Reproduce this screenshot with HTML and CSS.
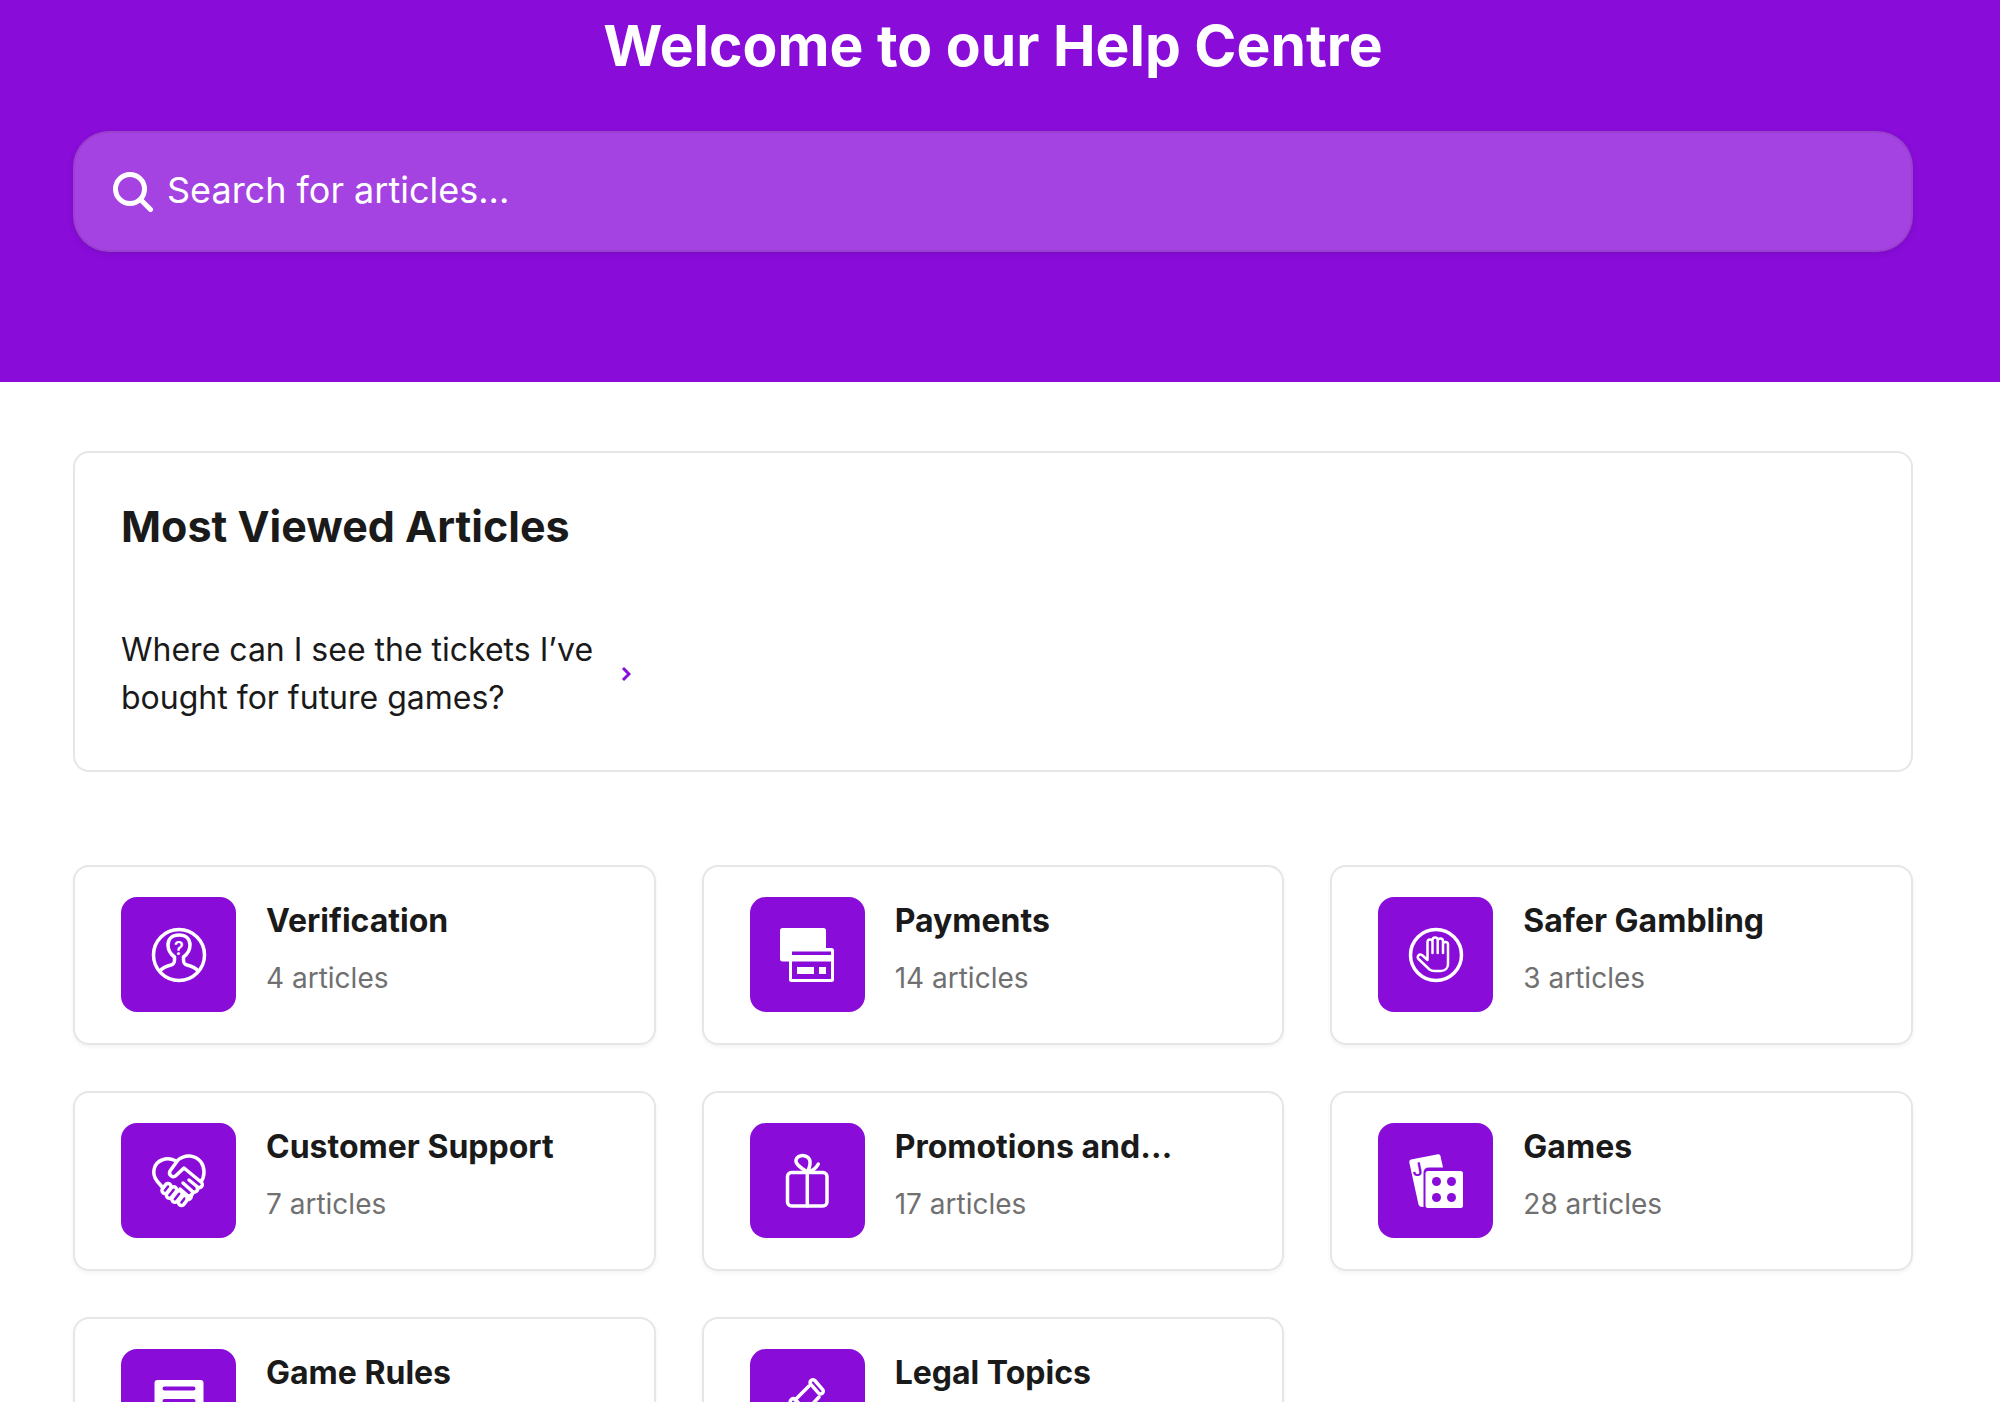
FILE: index.html
```html
<!DOCTYPE html>
<html lang="en">
<head>
    <meta charset="UTF-8">
    <meta name="viewport" content="width=device-width, initial-scale=1.0">
    <title>Help Centre</title>
    <link rel="stylesheet" href="styles.css">
</head>
<body>
    <header class="header">
        <h1>Welcome to our Help Centre</h1>
        <form class="search-bar" role="search">
            <label for="q" aria-label="Search">
                <svg class="search-icon" viewBox="0 0 40 40">
                    <circle cx="17" cy="17" r="14.5"/>
                    <path d="M27.500 27.500L37.500 37.500"/>
                </svg>
            </label>
            <input type="text" id="q" name="q" placeholder="Search for articles...">
        </form>
    </header>

    <main class="content">
        <section class="most-viewed">
            <h2>Most Viewed Articles</h2>
            <a class="article" href="#tickets">
                <span>Where can I see the tickets I’ve bought for future games?</span>
                <svg class="chevron" viewBox="0 0 10 16"><path d="M2 2l6 6-6 6"/></svg>
            </a>
        </section>

        <section class="topics">
            <a class="card" href="#verification">
                <span class="tile">
                    <svg class="line" viewBox="0 0 54 54">
                        <circle cx="27" cy="27" r="25.500"/>
                        <path d="M8 43c3-4 7-5 11-6 3-1 3.500-2 3.500-5v-3c-4-3-6.500-7-6.500-12 0-6 4-10 11-10s11 4 11 10c0 5-2.500 9-6.500 12v3c0 3 .5 4 3.500 5 4 1 8 2 11 6"/>
                        <text class="glyph" x="27" y="27">?</text>
                    </svg>
                </span>
                <div class="card-text">
                    <h3>Verification</h3>
                    <p>4 articles</p>
                </div>
            </a>

            <a class="card" href="#payments">
                <span class="tile">
                    <svg class="solid" viewBox="0 0 54 54">
                        <rect width="46" height="33.500" rx="2.500"/>
                        <rect x="9" y="20" width="45" height="34" rx="2.500"/>
                        <path class="cut" d="M12 23.500h39v3.500H12zM12 33.500h39V51H12z"/>
                        <path d="M17 39h17v7H17zM39 39h7v7h-7z"/>
                    </svg>
                </span>
                <div class="card-text">
                    <h3>Payments</h3>
                    <p>14 articles</p>
                </div>
            </a>

            <a class="card" href="#safer-gambling">
                <span class="tile">
                    <svg class="line" viewBox="0 0 54 54">
                        <circle cx="27" cy="27" r="25.500"/>
                        <path class="thin" d="M18.500 32L13 27c-3-1.500-5.500 1.500-3.500 4l11 10.500c1.500 1.200 3 1.500 5 1.500h6c4.500 0 7.500-2.500 7.500-7V16.500c0-3.500-5-3.500-5 0V25M18.500 32V14c0-3.500 5-3.500 5 0v11M23.500 14v-2c0-3.500 5.200-3.500 5.200 0v13M28.700 13c0-3.500 5.300-3.500 5.300 0v12"/>
                    </svg>
                </span>
                <div class="card-text">
                    <h3>Safer Gambling</h3>
                    <p>3 articles</p>
                </div>
            </a>

            <a class="card" href="#customer-support">
                <span class="tile">
                    <svg class="line" viewBox="0 0 54 54">
                        <path d="M11 34L5 27C-1 19 2 9 10 6c5-2 9-1.500 13 .5"/>
                        <path d="M49 28c4-6 4-14 0-20C43 .5 33 0 26 6l-8 11c-2 4 3 7.500 6 4.500l8-7.500 17 14c3.500 3-.5 7.500-4 4.500l-8-6.500M45 33c2 4-2 6.500-5 4l-9-8M40 37c2 4-2 6.500-5 4l-7-6"/>
                        <rect x="11.500" y="29" width="6" height="11" rx="3" transform="rotate(38 14.500 34.500)"/>
                        <rect x="16.500" y="32" width="6" height="13" rx="3" transform="rotate(38 19.500 38.500)"/>
                        <rect x="22" y="36" width="6" height="13" rx="3" transform="rotate(38 25 42.500)"/>
                        <rect x="28" y="41" width="6" height="11" rx="3" transform="rotate(38 31 46.500)"/>
                        <path d="M35 45c2 1.500 5-1 4-4"/>
                    </svg>
                </span>
                <div class="card-text">
                    <h3>Customer Support</h3>
                    <p>7 articles</p>
                </div>
            </a>

            <a class="card" href="#promotions">
                <span class="tile">
                    <svg class="line" viewBox="0 0 54 54">
                        <rect x="7.500" y="18.500" width="39.500" height="33.500" rx="4"/>
                        <path d="M27.300 52V18C21 14 15 10 16 6c1-4 6-5 9-4 6 1.500 6.500 8 2.300 16 5-1 9-4 11-8"/>
                    </svg>
                </span>
                <div class="card-text">
                    <h3>Promotions and…</h3>
                    <p>17 articles</p>
                </div>
            </a>

            <a class="card" href="#games">
                <span class="tile">
                    <svg class="solid" viewBox="0 0 54 54">
                        <path d="M2 5.500L29 .3q2-.3 2.500 1.700l2.500 11.500H20q-5.500 0-5.500 5.500v34q-4 .5-5-2.500L.3 8.500q-.5-2.500 1.700-3z"/>
                        <text class="glyph cut" x="8" y="22" transform="rotate(-11 8 15)">J</text>
                        <rect x="16.500" y="17" width="37.500" height="37" rx="2.500"/>
                        <g class="cut">
                            <circle cx="27.500" cy="27.500" r="4.500"/>
                            <circle cx="42.500" cy="27.500" r="4.500"/>
                            <circle cx="27.500" cy="43.500" r="4.500"/>
                            <circle cx="42.500" cy="43.500" r="4.500"/>
                        </g>
                    </svg>
                </span>
                <div class="card-text">
                    <h3>Games</h3>
                    <p>28 articles</p>
                </div>
            </a>

            <a class="card" href="#game-rules">
                <span class="tile">
                    <svg class="solid" viewBox="0 0 54 54">
                        <rect x="2.500" width="49" height="54" rx="3"/>
                        <path class="cut-line" d="M12.500 8.500h29M12.500 21h29M12.500 33.500h29M12.500 45h18"/>
                    </svg>
                </span>
                <div class="card-text">
                    <h3>Game Rules</h3>
                </div>
            </a>

            <a class="card" href="#legal-topics">
                <span class="tile">
                    <svg class="line" viewBox="0 0 54 54">
                        <rect x="28" y="4" width="17" height="5.500" rx="2.500" transform="rotate(49 36.500 7)"/>
                        <path d="M29 6L15 20M39 17L26 31"/>
                        <rect x="8" y="24" width="21" height="6" rx="2.500" transform="rotate(49 18 27)"/>
                        <path d="M31 25l20 18c2 3-2 6-4 4L28 29M4 52h24v-6H4z"/>
                    </svg>
                </span>
                <div class="card-text">
                    <h3>Legal Topics</h3>
                </div>
            </a>
        </section>
    </main>
</body>
</html>
```
FILE: styles.css
```css
* {
    box-sizing: border-box;
}
html {
    overflow-x: hidden;
    scrollbar-width: none;
}
body {
    margin: 0;
    font-family: Inter, "Liberation Sans", sans-serif;
    color: #1a1a1a;
    background-color: #fff;
}
h1, h2, h3, p {
    margin: 0;
}
a {
    color: inherit;
    text-decoration: none;
}
svg {
    display: block;
    flex: none;
}

/* Header */
.header {
    background-color: #890cd9;
    padding: 10px 87px 130px 73px;
}
.header h1 {
    color: #fff;
    font-size: 57px;
    line-height: 72px;
    font-weight: 700;
    text-align: center;
    margin-bottom: 49px;
}
.search-bar {
    display: flex;
    align-items: center;
    gap: 14px;
    height: 121px;
    padding: 0 38px;
    border: 2px solid rgba(128, 64, 160, 0.3);
    border-radius: 36px;
    background-color: #a443e2;
    box-shadow: 0 2px 6px rgba(0, 0, 0, 0.1);
}
.search-icon {
    width: 40px;
    height: 40px;
    fill: none;
    stroke: #fff;
    stroke-width: 5;
    stroke-linecap: round;
}
.search-bar input {
    flex: 1;
    padding: 0 0 4px;
    border: none;
    outline: none;
    background: none;
    color: #fff;
    font-family: inherit;
    font-size: 36px;
}
.search-bar input::placeholder {
    color: #fff;
    opacity: 1;
}

/* Most viewed */
.content {
    padding: 69px 87px 60px 73px;
}
.most-viewed {
    padding: 45px 46px 48px;
    border: 2px solid #e6e6e6;
    border-radius: 16px;
    margin-bottom: 93px;
}
.most-viewed h2 {
    font-size: 43px;
    line-height: 56px;
    font-weight: 700;
    margin-bottom: 72px;
}
.article {
    display: flex;
    align-items: center;
    justify-content: space-between;
    width: 510px;
    font-size: 32px;
    line-height: 48px;
}
.article span {
    width: 480px;
}
.chevron {
    width: 10px;
    height: 16px;
    fill: none;
    stroke: #890cd9;
    stroke-width: 3;
}

/* Topic cards */
.topics {
    display: grid;
    grid-template-columns: repeat(3, 1fr);
    gap: 46px;
}
.card {
    display: flex;
    gap: 30px;
    padding: 30px 46px;
    height: 180px;
    border: 2px solid #e6e6e6;
    border-radius: 16px;
    box-shadow: 0 2px 4px rgba(0, 0, 0, 0.05);
}
.tile {
    display: flex;
    align-items: center;
    justify-content: center;
    flex: none;
    width: 115px;
    height: 115px;
    border-radius: 16px;
    background-color: #890cd9;
}
.tile svg {
    width: 54px;
    height: 54px;
    overflow: visible;
}
.card h3 {
    font-size: 32px;
    line-height: 48px;
    font-weight: 700;
    margin-bottom: 13px;
}
.card p {
    color: #707070;
    font-size: 28px;
    line-height: 40px;
}

/* Icons */
.line {
    fill: none;
    stroke: #fff;
    stroke-width: 3.5;
    stroke-linecap: round;
    stroke-linejoin: round;
}
.thin {
    stroke-width: 2.5;
}
.solid {
    fill: #fff;
}
.cut {
    fill: #890cd9;
}
.cut-line {
    stroke: #890cd9;
    stroke-width: 4;
    stroke-linecap: round;
}
.glyph {
    font-size: 18px;
    font-weight: 600;
    text-anchor: middle;
    stroke: none;
}
.line .glyph {
    fill: #fff;
}
```
